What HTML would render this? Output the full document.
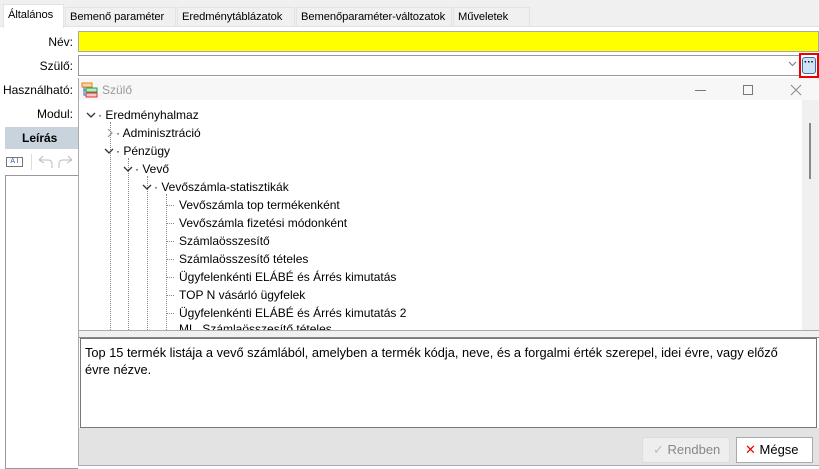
<!DOCTYPE html>
<html><head><meta charset="utf-8"><style>
*{box-sizing:border-box;margin:0;padding:0}
body{width:819px;height:469px;overflow:hidden;background:#fff;font-family:"Liberation Sans",sans-serif;font-size:12px;color:#000;position:relative}
.a{position:absolute}
.tab{position:absolute;top:7px;height:20px;background:#f0f0f0;border:1px solid #e3e3e3;padding:3px 0 0 4px;font-size:11.2px;white-space:nowrap;overflow:hidden;letter-spacing:-0.1px}
.lbl{position:absolute;right:746px;font-size:12px;text-align:right;white-space:nowrap}
.tr{position:absolute;font-size:12px;white-space:nowrap}
.vd{position:absolute;border-left:1px dotted #888;width:0}
.hd{position:absolute;border-top:1px dotted #888;height:0}
.cv{position:absolute}
</style></head><body>
<div class="a" style="left:0;top:0;width:819px;height:5px;background:#f0f0f0"></div>
<div class="a" style="left:0;top:5px;width:819px;height:22px;background:#f0f0f0;border-bottom:1px solid #e3e3e3"></div>
<div class="tab" style="left:3px;top:4px;height:24px;background:#fff;border-bottom:none;padding-top:4px;width:61px">Általános</div>
<div class="tab" style="left:65px;width:111px">Bemenő paraméter</div>
<div class="tab" style="left:177px;width:118px">Eredménytáblázatok</div>
<div class="tab" style="left:296px;width:156px">Bemenőparaméter-változatok</div>
<div class="tab" style="left:453px;width:77px">Műveletek</div>

<div class="lbl" style="top:35px">Név:</div>
<div class="a" style="left:78px;top:31px;width:741px;height:21px;background:#ff0;border:1px solid #aaa"></div>
<div class="lbl" style="top:59px">Szülő:</div>
<div class="a" style="left:78px;top:55px;width:722px;height:21px;background:#fff;border:1px solid #999"></div>
<svg class="a" style="left:788px;top:61px" width="9" height="6"><path d="M1 1L4.5 4.5L8 1" stroke="#777" fill="none"/></svg>
<div class="a" style="left:799px;top:53px;width:20px;height:25px;border:2px solid #e00;background:#fff"></div>
<div class="a" style="left:802px;top:57px;width:14px;height:17px;border:1px solid #3b6ea5;border-radius:3px;background:#cfe3f7;font-size:10px;line-height:10px;text-align:center;font-weight:bold">···</div>
<div class="lbl" style="top:83px">Használható:</div>
<div class="lbl" style="top:107px">Modul:</div>
<div class="a" style="left:5px;top:127px;width:73px;height:22px;background:#c8d3de;font-weight:bold;padding:4px 0 0 17px">Leírás</div>
<div class="a" style="left:6px;top:157px;width:17px;height:10px;border:1px solid #777;font-size:7px;line-height:8px;text-align:center;color:#35a">A I</div>
<div class="a" style="left:31px;top:154px;width:1px;height:16px;background:#ddd"></div>
<svg class="a" style="left:36px;top:154px" width="40" height="16"><path d="M3 6L7 2M3 6L8 9M3 6H12Q16 6 16 10V14" stroke="#bbb" fill="none"/><path d="M36 6L32 2M36 6L31 9M36 6H27Q23 6 23 10V14" stroke="#bbb" fill="none"/></svg>
<div class="a" style="left:5px;top:175px;width:73px;height:294px;border:1px solid #999;border-right:none"></div>

<div class="a" style="left:78px;top:78px;width:741px;height:388px;background:#fff;border-left:1px solid #aaa;border-bottom:1px solid #aaa"></div>
<div class="a" style="left:79px;top:78px;width:740px;height:22px;background:#f7f7f7"></div>
<svg class="a" style="left:81px;top:82px" width="17" height="16"><rect x="1" y="1" width="10" height="4" fill="#fbd7a5" stroke="#e8801a"/><rect x="5" y="6" width="11" height="4" fill="#bfe8c9" stroke="#2a9a4a"/><rect x="5" y="11" width="11" height="4" fill="#f8c6c6" stroke="#d33"/><path d="M3 5V13H5M3 8H5" stroke="#36c" fill="none"/></svg>
<div class="a" style="left:102px;top:83px;color:#999">Szülő</div>
<div class="a" style="left:695px;top:90px;width:11px;height:1px;background:#777"></div>
<div class="a" style="left:743px;top:85px;width:10px;height:10px;border:1px solid #777"></div>
<svg class="a" style="left:790px;top:84px" width="12" height="12"><path d="M1 1L11 11M11 1L1 11" stroke="#888"/></svg>
<div class="a" style="left:802px;top:100px;width:17px;height:230px;background:#f0f0f0"></div>
<div class="a" style="left:809px;top:123px;width:2px;height:56px;background:#888"></div>

<div class="vd" style="left:110px;top:122px;height:208px"></div>
<div class="vd" style="left:128px;top:158px;height:172px"></div>
<div class="vd" style="left:147px;top:176px;height:154px"></div>
<div class="vd" style="left:166px;top:194px;height:136px"></div>
<div class="hd" style="left:166px;top:205px;width:8px"></div>
<div class="hd" style="left:166px;top:223px;width:8px"></div>
<div class="hd" style="left:166px;top:241px;width:8px"></div>
<div class="hd" style="left:166px;top:259px;width:8px"></div>
<div class="hd" style="left:166px;top:277px;width:8px"></div>
<div class="hd" style="left:166px;top:295px;width:8px"></div>
<div class="hd" style="left:166px;top:313px;width:8px"></div>
<svg class="cv" style="left:86px;top:111px" width="10" height="8"><path d="M1 2L5 6L9 2" stroke="#333" stroke-width="1.3" fill="none"/></svg>
<svg class="cv" style="left:106px;top:128px" width="8" height="10"><path d="M2 1L6 5L2 9" stroke="#999" stroke-width="1.2" fill="none"/></svg>
<svg class="cv" style="left:104px;top:147px" width="10" height="8"><path d="M1 2L5 6L9 2" stroke="#333" stroke-width="1.3" fill="none"/></svg>
<svg class="cv" style="left:123px;top:165px" width="10" height="8"><path d="M1 2L5 6L9 2" stroke="#333" stroke-width="1.3" fill="none"/></svg>
<svg class="cv" style="left:142px;top:183px" width="10" height="8"><path d="M1 2L5 6L9 2" stroke="#333" stroke-width="1.3" fill="none"/></svg>
<div class="tr" style="left:98px;top:108px">· Eredményhalmaz</div>
<div class="tr" style="left:116px;top:126px">· Adminisztráció</div>
<div class="tr" style="left:116px;top:144px">· Pénzügy</div>
<div class="tr" style="left:135px;top:162px">· Vevő</div>
<div class="tr" style="left:154px;top:180px">· Vevőszámla-statisztikák</div>
<div class="tr" style="left:179px;top:198px">Vevőszámla top termékenként</div>
<div class="tr" style="left:179px;top:216px">Vevőszámla fizetési módonként</div>
<div class="tr" style="left:179px;top:234px">Számlaösszesítő</div>
<div class="tr" style="left:179px;top:252px">Számlaösszesítő tételes</div>
<div class="tr" style="left:179px;top:270px">Ügyfelenkénti ELÁBÉ és Árrés kimutatás</div>
<div class="tr" style="left:179px;top:288px">TOP N vásárló ügyfelek</div>
<div class="tr" style="left:179px;top:306px">Ügyfelenkénti ELÁBÉ és Árrés kimutatás 2</div>
<div class="a" style="left:179px;top:324px;width:200px;height:6px;overflow:hidden"><div class="tr" style="left:0;top:-2px">ML_Számlaösszesítő tételes</div></div>
<div class="a" style="left:79px;top:330px;width:740px;height:8px;background:#f0f0f0;border-top:1px solid #aaa;border-bottom:1px solid #888"></div>
<div class="a" style="left:80px;top:338px;width:737px;height:90px;border:1px solid #777;background:#fff;padding:5px 4px;font-size:12.8px;line-height:17px;white-space:nowrap">Top 15 termék listája a vevő számlából, amelyben a termék kódja, neve, és a forgalmi érték szerepel, idei évre, vagy előző <br>évre nézve.</div>
<div class="a" style="left:79px;top:428px;width:740px;height:37px;background:#e3e3e3"></div>
<div class="a" style="left:642px;top:437px;width:88px;height:26px;border:1px solid #ddd;background:#eee;color:#888;font-size:13px;padding:4px 0 0 10px"><span style="color:#bbb">✓</span> Rendben</div>
<div class="a" style="left:736px;top:437px;width:77px;height:26px;border:1px solid #aaa;background:#fff;font-size:13px;padding:4px 0 0 8px"><span style="color:#e00">✕</span> Mégse</div>
</body></html>
